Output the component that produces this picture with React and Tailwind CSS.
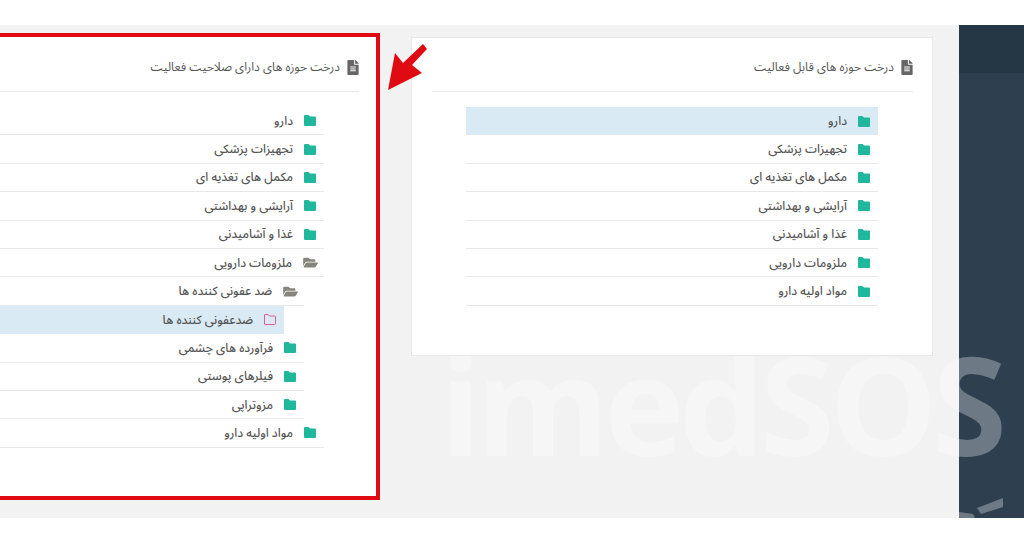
import React from 'react';
import { FaFolderOpen, FaFileAlt } from 'react-icons/fa';

const fontStack = { fontFamily: '"Noto Sans Arabic", "DejaVu Sans", sans-serif' };

const baseTree = [
    { name: 'دارو' },
    { name: 'تجهیزات پزشکی' },
    { name: 'مکمل های تغذیه ای' },
    { name: 'آرایشی و بهداشتی' },
    { name: 'غذا و آشامیدنی' },
];

const activeTree = [
    { name: 'دارو', selected: true },
    ...baseTree.slice(1),
    { name: 'ملزومات دارویی' },
    { name: 'مواد اولیه دارو' },
];

const expertiseTree = [
    ...baseTree,
    {
        name: 'ملزومات دارویی',
        open: true,
        children: [
            {
                name: 'ضد عفونی کننده ها',
                open: true,
                children: [{ name: 'ضدعفونی کننده ها', selected: true, empty: true }],
            },
            { name: 'فرآورده های چشمی' },
            { name: 'فیلرهای پوستی' },
            { name: 'مزوتراپی' },
        ],
    },
    { name: 'مواد اولیه دارو' },
];

function NodeIcon({ node }) {
    if (node.empty) {
        return (
            <svg className="w-[12px] h-[11px] text-[#d9608c]" viewBox="0 0 12 11" fill="none" stroke="currentColor">
                <path d="M1 .5h3.2l1.3 1.5h5a1 1 0 0 1 1 1v6.5a1 1 0 0 1-1 1h-9.5a.5.5 0 0 1-.5-.5V1a.5.5 0 0 1 .5-.5z" />
            </svg>
        );
    }
    if (node.open) return <FaFolderOpen className="w-[15px] h-[13px] shrink-0 text-[#85857b]" />;
    return (
        <svg className="w-[12px] h-[11px] text-[#1fb89c]" viewBox="0 0 12 11" fill="currentColor">
            <path d="M1 0h3.5L6 1.5h5a1 1 0 0 1 1 1V10a1 1 0 0 1-1 1H1a1 1 0 0 1-1-1V1a1 1 0 0 1 1-1z" />
        </svg>
    );
}

function Tree({ nodes, nested }) {
    return (
        <ul className={nested ? 'mr-[20px]' : ''}>
            {nodes.map((node) => (
                <li key={node.name}>
                    <div
                        className={`h-[28.4px] flex items-center pr-[7px] text-[12px] font-medium text-[#555] ${
                            node.open ? 'gap-[11px]' : 'gap-[10px]'
                        } ${node.selected ? 'bg-[#d9eaf5]' : 'border-b border-[#e8e8e8]'}`}
                    >
                        <span className="w-[14px] flex justify-center">
                            <NodeIcon node={node} />
                        </span>
                        <span className="mt-[2px]">{node.name}</span>
                    </div>
                    {node.children && <Tree nodes={node.children} nested />}
                </li>
            ))}
        </ul>
    );
}

function CardHeader({ title, className }) {
    return (
        <div className={`pt-[6px] flex items-center gap-[7px] border-b border-[#e8e8e8] text-[12px] text-[#555] ${className}`}>
            <FaFileAlt className="w-[12px] h-[15px] text-[#666]" />
            <span className="mt-[1px]">{title}</span>
        </div>
    );
}

export default function App() {
    return (
        <div dir="rtl" className="h-[545px] bg-white overflow-hidden" style={fontStack}>
            <div className="h-[25px]" />
            <div className="relative h-[493px] flex overflow-hidden">
                {/* Sidebar */}
                <div className="w-[65px] shrink-0 bg-[#2e4050]">
                    <div className="h-[48px] bg-[#253644]" />
                </div>

                {/* Content */}
                <div className="flex-1 bg-[#f2f2f2] flex justify-end items-start gap-[31px]">
                    <div className="relative z-10 w-[522px] h-[319px] mt-[12px] mr-[26px] bg-white border border-[#e8e8e8] pr-[19px] pl-[20px]">
                        <CardHeader title="درخت حوزه های قابل فعالیت" className="h-[54px]" />
                        <div className="mt-[15px] mr-[35px] ml-[34px]">
                            <Tree nodes={activeTree} />
                        </div>
                    </div>
                    <div className="relative z-10 w-[380px] h-[467px] mt-[8px] bg-white border-[4px] border-l-0 border-[#e00b12] pr-[17px]">
                        <CardHeader title="درخت حوزه های دارای صلاحیت فعالیت" className="h-[55px]" />
                        <div className="mt-[15px] mr-[35px]">
                            <Tree nodes={expertiseTree} />
                        </div>
                    </div>
                </div>

                {/* Watermark */}
                <div
                    dir="ltr"
                    className="absolute left-[440px] top-[311px] text-[136px] leading-none font-bold tracking-[-0.04em] text-white/30 whitespace-nowrap"
                    style={{ fontFamily: '"Open Sans", sans-serif' }}
                >
                    imedSOS
                </div>
                <svg className="absolute left-[959px] top-[470px] w-[65px] h-[23px]" viewBox="0 0 65 23">
                    <polygon points="44,3 44,12 22,19 18,13" fill="#fff" fillOpacity="0.3" />
                    <polygon points="0,17 14,19 16,23 0,23" fill="#fff" fillOpacity="0.3" />
                </svg>

                {/* Arrow */}
                <svg className="absolute left-[385px] top-[15px] z-20 w-[45px] h-[52px]" viewBox="385 40 45 52">
                    <polygon points="388,90 395,53 403,63 423,44 427,49 412,65 422,73" fill="#e00b12" />
                </svg>
            </div>
        </div>
    );
}
